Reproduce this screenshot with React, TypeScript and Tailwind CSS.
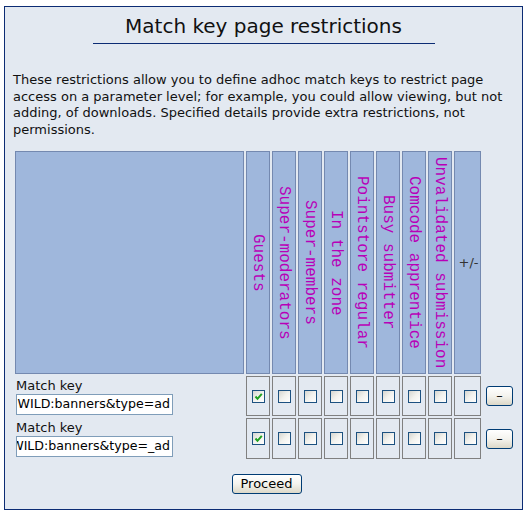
const groups = [
  "Guests",
  "Super-moderators",
  "Super-members",
  "In the zone",
  "Pointstore regular",
  "Busy submitter",
  "Comcode apprentice",
  "Unvalidated submission",
];

const rows = [
  { value: "WILD:banners&type=ad", checked: [true, false, false, false, false, false, false, false, false] },
  { value: "WILD:banners&type=_ad", checked: [true, false, false, false, false, false, false, false, false] },
];

function Checkbox({ checked }: { checked: boolean }) {
  return (
    <div className="w-[13px] h-[13px] border border-[#1c5180] bg-linear-to-br from-[#d6d6d0] via-[#f2f2ee] to-white flex items-center justify-center">
      {checked && (
        <svg width="9" height="9" viewBox="0 0 9 9">
          <path d="M1.5 4.5 L3.5 6.8 L7.8 1.8" fill="none" stroke="#21a121" strokeWidth="2" />
        </svg>
      )}
    </div>
  );
}

function XpButton({ children, className }: { children: React.ReactNode; className: string }) {
  return (
    <div
      className={`rounded-[3px] border border-[#003c74] bg-linear-to-b from-white via-[#f4f3ee] to-[#dcd8c8] flex items-center justify-center text-[13px] text-black ${className}`}
    >
      {children}
    </div>
  );
}

export default function App() {
  return (
    <div className="min-h-[515px] bg-white pt-[6px] pl-[4px] font-['DejaVu_Sans',Verdana,sans-serif]">
      <div className="w-[519px] h-[504px] border border-[#0c2c74] bg-[#e3e9f1]">
        <h2 className="w-[342px] mx-auto mt-[7px] pb-[5px] border-b border-[#0c2c74] text-center text-[20px] leading-[24px] text-[#111]">
          Match key page restrictions
        </h2>

        <p className="mt-[28px] pl-[8px] pr-[10px] text-[13px] leading-[16.5px] text-[#111]">
          These restrictions allow you to define adhoc match keys to restrict page
          access on a parameter level; for example, you could allow viewing, but not
          adding, of downloads. Specified details provide extra restrictions, not
          permissions.
        </p>

        <div className="mt-[13px] ml-[10px] grid grid-cols-[229px_repeat(8,24px)_27px_auto] grid-rows-[223px_40px_41px] gap-[2px]">
          <div className="border border-[#7489b0] bg-[#9fb7dc]" />
          {groups.map((g) => (
            <div
              key={g}
              className="border border-[#7489b0] bg-[#9fb7dc] flex items-center justify-center"
            >
              <span className="[writing-mode:vertical-rl] font-['Liberation_Mono',monospace] text-[16px] leading-[16px] text-[#b800b8] whitespace-nowrap">
                {g}
              </span>
            </div>
          ))}
          <div className="border border-[#7489b0] bg-[#9fb7dc] flex items-center justify-center pl-[2px]">
            <span className="text-[13px] text-[#333]">+/-</span>
          </div>
          <div />

          {rows.map((row, ri) => (
            <div key={ri} className="contents">
              <div className="pl-[1px] flex flex-col justify-center">
                <span className="text-[13px] leading-[16px] text-[#111]">Match key</span>
                <div className="w-[157px] h-[21px] border border-[#7f9db9] bg-white overflow-hidden flex items-center justify-end pr-[2px]">
                  <span className="whitespace-nowrap text-[12.6px] text-black">{row.value}</span>
                </div>
              </div>
              {row.checked.map((c, ci) => (
                <div
                  key={ci}
                  className={`border border-[#808080] flex items-center justify-center ${ci === 8 ? "pl-[5px]" : ""}`}
                >
                  <Checkbox checked={c} />
                </div>
              ))}
              <div className="flex items-center pl-[3px]">
                <XpButton className="w-[27px] h-[20px]">–</XpButton>
              </div>
            </div>
          ))}
        </div>

        <div className="mt-[15px] flex justify-center pl-[6px]">
          <XpButton className="w-[70px] h-[20px]">Proceed</XpButton>
        </div>
      </div>
    </div>
  );
}
